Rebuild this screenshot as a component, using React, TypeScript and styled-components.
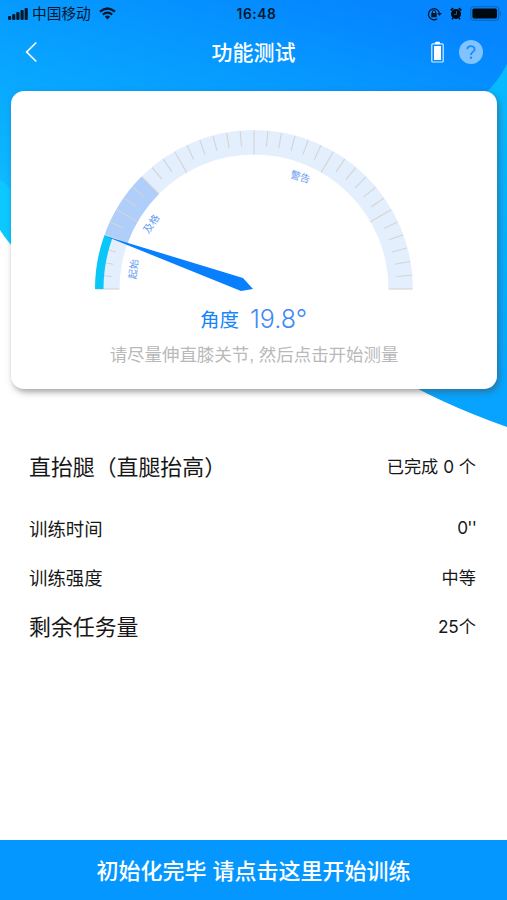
import React from "react";
import styled, { createGlobalStyle } from "styled-components";

const sans = '"Inter", "Noto Sans CJK SC", sans-serif';
const roman = '"Liberation Sans", "Noto Sans CJK SC", sans-serif';

const GlobalStyle = createGlobalStyle`
  * { box-sizing: border-box; }
  body { margin: 0; background: #fff; font-family: ${sans}; }
`;

const Page = styled.main`
  position: relative;
  display: flex;
  flex-direction: column;
  width: 507px;
  height: 900px;
  overflow: hidden;
  background: #fff;
  isolation: isolate;
`;
const Backdrop = styled.svg`
  position: absolute;
  inset: 0;
  z-index: -1;
`;
const StatusBar = styled.div`
  display: grid;
  grid-template-columns: 1fr auto 1fr;
  align-items: center;
  height: 27px;
  padding: 0 5px 0 8px;
  color: #03182c;
`;
const StatusGroup = styled.div<{ $end?: boolean }>`
  display: flex;
  align-items: center;
  justify-content: ${(p) => (p.$end ? "flex-end" : "flex-start")};
`;
const Carrier = styled.span`
  margin: 1px 8px 0 4px;
  font-size: 14.7px;
  line-height: 20px;
`;
const Clock = styled.span`
  padding-left: 3px;
  font: 600 13.8px/20px ${sans};
  letter-spacing: 0.6px;
`;
const NavBar = styled.header`
  display: grid;
  grid-template-columns: 1fr auto 1fr;
  align-items: center;
  height: 49px;
  padding: 0 24px;
  color: #fff;
`;
const Title = styled.h1`
  margin: 2px 0 0;
  font: 500 21px/30px ${sans};
`;
const Actions = styled.div`
  display: flex;
  align-items: center;
  justify-content: flex-end;
  gap: 15px;
`;
const Card = styled.section`
  display: flex;
  flex-direction: column;
  align-items: center;
  height: 298px;
  margin: 15px 10px 0 11px;
  border-radius: 13px;
  background: #fff;
  box-shadow: 2px 3px 6px rgba(70, 70, 70, 0.5);
`;
const Dial = styled.svg`
  display: block;
  margin-top: 39px;
  overflow: visible;
`;
const DialLabel = styled.text`
  font: 10px ${sans};
  fill: #659bf3;
  text-anchor: middle;
  dominant-baseline: central;
`;
const Reading = styled.div`
  display: flex;
  align-items: center;
  gap: 11px;
  height: 34px;
  margin-top: 11px;
  padding-right: 1px;
  color: #1684fa;
  font-size: 19.5px;
`;
const ReadingLabel = styled.span`
  margin-top: 1px;
  line-height: 32px;
`;
const Degrees = styled.span`
  color: #4289fa;
  font: 300 25px/34px ${sans};
`;
const Hint = styled.p`
  margin: 5px 0 0;
  color: #b9b9b9;
  font: 17.45px/28px ${roman};
  white-space: nowrap;
`;
const Details = styled.dl`
  display: flex;
  flex-direction: column;
  margin: 52px 31px 0 29px;
  color: #171717;
`;
const DetailRow = styled.div<{ $large?: boolean; $gap?: boolean }>`
  display: flex;
  align-items: center;
  justify-content: space-between;
  height: 49px;
  margin-bottom: ${(p) => (p.$gap ? "13px" : "0")};
  dt {
    margin-bottom: ${(p) => (p.$large ? "1px" : "0")};
    font-size: ${(p) => (p.$large ? "21.9px" : "18.4px")};
  }
`;
const Value = styled.dd<{ $tight?: boolean }>`
  margin: 0;
  font-size: 17.2px;
  letter-spacing: ${(p) => (p.$tight ? "-0.8px" : "0")};
`;
const StartButton = styled.button`
  height: 60px;
  margin-top: auto;
  padding: 3px 0 0;
  border: 0;
  background: #0497ff;
  color: #fff;
  font: 500 22px/57px ${roman};
`;

const CX = 159;
const CY = 159;
const OUTER = 159;
const INNER = 134.5;

function point(angle: number, radius: number) {
  const a = (angle * Math.PI) / 180;
  return [CX - radius * Math.cos(a), CY - radius * Math.sin(a)];
}
function band(from: number, to: number, outer: number, inner: number) {
  const a = point(from, outer);
  const b = point(to, outer);
  const c = point(to, inner);
  const d = point(from, inner);
  return `M${a} A${outer} ${outer} 0 0 1 ${b} L${c} A${inner} ${inner} 0 0 0 ${d}Z`;
}

function Gauge() {
  return (
    <Dial width="318" height="161" viewBox="0 0 318 161">
      <path d={band(0, 180, OUTER, INNER)} fill="#e4effd" />
      <path d={band(19.8, 45, OUTER, INNER)} fill="#b0cefa" />
      {Array.from({ length: 37 }, (_, i) => {
        const angle = i * 5;
        const major = angle % 30 === 0 || angle === 45;
        const [x1, y1] = point(angle, OUTER - 0.5);
        const [x2, y2] = point(angle, major ? INNER : OUTER - 16);
        return <line key={i} x1={x1} y1={y1} x2={x2} y2={y2} stroke="#d2d4d5" strokeWidth="1.1" />;
      })}
      <path d={band(0, 19.8, OUTER, 150.5)} fill="#0bc7f8" />
      <path d="M10 106 L148 148 L158 159 L146 161Z" fill="#087ffd" />
      <DialLabel transform="translate(38 139) rotate(-83)">起始</DialLabel>
      <DialLabel transform="translate(56 93.5) rotate(-55)">及格</DialLabel>
      <DialLabel transform="translate(205.5 46.5) rotate(17)">警告</DialLabel>
    </Dial>
  );
}

function BackgroundShapes() {
  return (
    <Backdrop width="507" height="440" viewBox="0 0 507 440">
      <defs>
        <linearGradient id="sky" gradientUnits="userSpaceOnUse" x1="350" y1="0" x2="270" y2="270">
          <stop offset="0" stopColor="#0586ff" />
          <stop offset="0.35" stopColor="#069aff" />
          <stop offset="1" stopColor="#0dbbff" />
        </linearGradient>
        <linearGradient id="edge" x1="0" y1="0" x2="0" y2="1">
          <stop offset="0" stopColor="#08bbff" />
          <stop offset="1" stopColor="#08a2ff" />
        </linearGradient>
      </defs>
      <path d="M0 170H20V254Q8 243 0 230Z" fill="#0bc9ff" />
      <path d="M507 50H440V200H300V300Q368 378 507 427Z" fill="url(#edge)" />
      <path d="M0 0H507V64Q499 81 480 99L400 200H20L12 191Q7 184 0 180Z" fill="url(#sky)" />
    </Backdrop>
  );
}

const SignalIcon = () => (
  <svg width="20" height="12" viewBox="0 0 20 12" fill="currentColor">
    <rect x="0" y="8" width="3.2" height="4" rx="1" />
    <rect x="4.2" y="6" width="3.2" height="6" rx="1" />
    <rect x="8.3" y="4" width="3.2" height="8" rx="1" />
    <rect x="12.5" y="2" width="3.2" height="10" rx="1" />
    <rect x="16.6" y="0" width="3.2" height="12" rx="1" />
  </svg>
);
const WifiIcon = () => (
  <svg width="17" height="13" viewBox="0 0 17 13" fill="none" stroke="currentColor">
    <path d="M1 4.7Q8.5-1.8 16 4.7" strokeWidth="2.3" />
    <path d="M3.8 7.6Q8.5 3.6 13.2 7.6" strokeWidth="2.1" />
    <path d="M5.8 9.6Q8.5 7.3 11.2 9.6L8.5 12.6Z" fill="currentColor" stroke="none" />
  </svg>
);
const LockIcon = () => (
  <svg width="15" height="14" viewBox="0 0 15 14" fill="none" stroke="currentColor">
    <path d="M10.2 11.7A5.5 5.5 0 1 1 12.4 6.2" strokeWidth="1.3" />
    <path d="M10.2 6H14.8L12.5 9Z" fill="currentColor" stroke="none" />
    <rect x="4.3" y="6" width="5.4" height="4.2" rx=".5" fill="currentColor" stroke="none" />
    <path d="M5.4 6.2V4.8a1.6 1.6 0 0 1 3.2 0V6.2" />
  </svg>
);
const AlarmIcon = styled.svg`
  margin: 0 8px;
`;
const BackIcon = () => (
  <svg width="14" height="22" viewBox="0 0 14 22" fill="none" stroke="currentColor" strokeWidth="1.7">
    <path d="M12.3 1.5 2.7 11 12.3 20.5" />
  </svg>
);

const rows = [
  { label: "直抬腿（直腿抬高）", value: "已完成 0 个", large: true, gap: true },
  { label: "训练时间", value: "0''", tight: true },
  { label: "训练强度", value: "中等" },
  { label: "剩余任务量", value: "25个", large: true },
];

export default function App() {
  return (
    <Page>
      <GlobalStyle />
      <BackgroundShapes />
      <StatusBar>
        <StatusGroup>
          <SignalIcon />
          <Carrier>中国移动</Carrier>
          <WifiIcon />
        </StatusGroup>
        <Clock>16:48</Clock>
        <StatusGroup $end>
          <LockIcon />
          <AlarmIcon width="12" height="13" viewBox="0 0 12 13">
            <circle cx="6" cy="7" r="5" fill="#010910" />
            <path d="M.7 3.4 3.2 1.1M11.3 3.4 8.8 1.1M3 11 2 12.2M9 11l1 1.2" stroke="#010910" strokeWidth="1.5" />
            <path d="M6.5 4V7.4H3.8" fill="none" stroke="#0879d0" strokeWidth=".8" />
          </AlarmIcon>
          <svg width="32" height="15" viewBox="0 0 32 15">
            <rect x=".7" y=".7" width="28" height="13.6" rx="3.2" fill="none" stroke="#0864b5" strokeWidth="1.1" />
            <rect x="2.4" y="2.5" width="24.6" height="10" rx="1.7" fill="#010910" />
            <path d="M30 5q2 2.5 0 5Z" fill="#0864b5" />
          </svg>
        </StatusGroup>
      </StatusBar>
      <NavBar>
        <BackIcon />
        <Title>功能测试</Title>
        <Actions>
          <svg width="13" height="22" viewBox="0 0 13 22">
            <rect x=".8" y="2.8" width="11.4" height="18.2" rx="1" fill="none" stroke="#d6ecff" strokeWidth="1.2" />
            <rect x="4" y=".7" width="5" height="2.5" rx="1" fill="#fff" />
            <rect x="3" y="5" width="7" height="14" fill="#fff" />
          </svg>
          <svg width="24" height="24" viewBox="0 0 24 24">
            <circle cx="12" cy="12" r="12" fill="#80c3ff" />
            <path d="M8.4 9.3C8.4 5 15.6 5 15.6 9.2C15.6 12 12 11.8 12 15" fill="none" stroke="#168cff" strokeWidth="1.8" />
            <circle cx="12" cy="17.8" r="1.2" fill="#168cff" />
          </svg>
        </Actions>
      </NavBar>
      <Card>
        <Gauge />
        <Reading>
          <ReadingLabel>角度</ReadingLabel>
          <Degrees>19.8°</Degrees>
        </Reading>
        <Hint>请尽量伸直膝关节, 然后点击开始测量</Hint>
      </Card>
      <Details>
        {rows.map((row) => (
          <DetailRow key={row.label} $large={row.large} $gap={row.gap}>
            <dt>{row.label}</dt>
            <Value $tight={row.tight}>{row.value}</Value>
          </DetailRow>
        ))}
      </Details>
      <StartButton>初始化完毕 请点击这里开始训练</StartButton>
    </Page>
  );
}
